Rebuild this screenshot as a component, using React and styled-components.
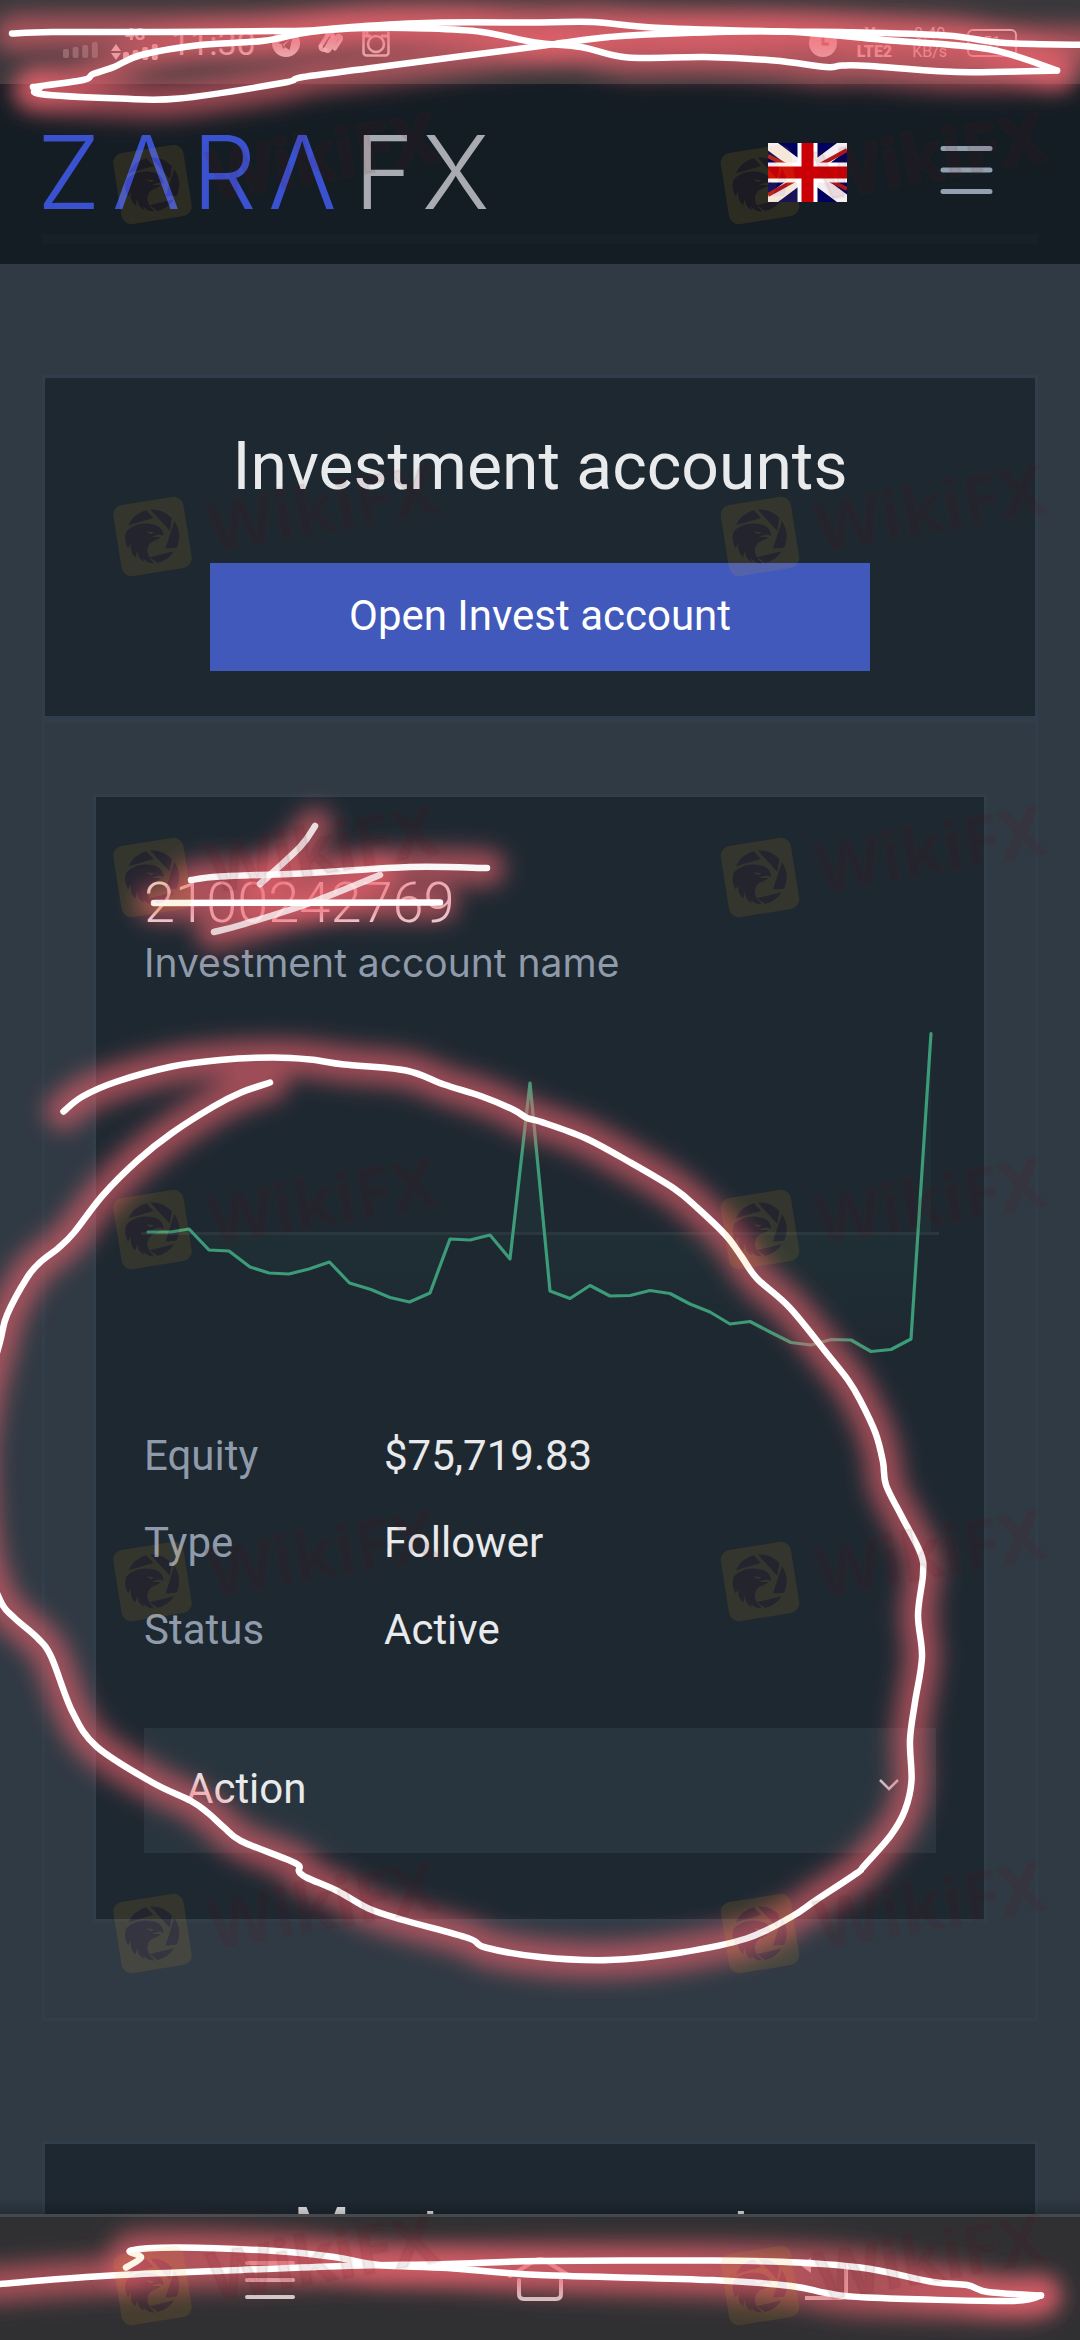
import React from "react";
import styled, { createGlobalStyle } from "styled-components";

const GlobalStyle = createGlobalStyle`
  *, *::before, *::after { box-sizing: border-box; }
  body { margin: 0; background: #303a44; font-family: Roboto, "Open Sans", sans-serif; }
  h1, h2, h3, p, dl, dd { margin: 0; font-weight: 400; }
`;

const Screen = styled.div`
  position: relative;
  display: flex;
  flex-direction: column;
  height: 100vh;
  overflow: hidden;
  background: #303a44;
`;

/* ---------- status bar ---------- */

const StatusBar = styled.div`
  display: flex;
  flex: none;
  align-items: center;
  justify-content: space-between;
  height: 84px;
  padding: 2px 63px 0;
  background: #39383b;
  color: rgba(255, 255, 255, 0.85);
`;

const StatusGroup = styled.div`
  display: flex;
  align-items: center;
  gap: ${(p) => p.$gap}px;
`;

const Clock = styled.span`
  padding-right: 4px;
  font-size: 34px;
  font-weight: 400;
  line-height: 40px;
`;

const Stack = styled.span`
  display: flex;
  flex-direction: column;
  align-items: center;
  font-size: 16px;
  font-weight: ${(p) => (p.$bold ? 900 : 400)};
  line-height: 18px;
`;

const Battery = styled.span`
  display: flex;
  align-items: center;
  justify-content: center;
  width: 50px;
  height: 28px;
  border: 2px solid currentColor;
  border-radius: 6px;
  font-size: 16px;
  line-height: 18px;
`;

/* ---------- site header ---------- */

const SiteHeader = styled.header`
  flex: none;
  padding: 0 42px 20px;
  background: #151d24;
`;

const HeaderRow = styled.div`
  display: flex;
  align-items: center;
  height: 150px;
  padding: 26px 45px 0 0;
`;

const HeaderRule = styled.div`
  height: 10px;
  background: #171f27;
`;

const LogoLink = styled.a`
  display: block;
  margin-right: auto;
  line-height: 0;
`;

const LogoText = styled.text`
  font-family: Inter, Roboto, sans-serif;
  font-size: 102px;
  font-weight: 300;
  fill: ${(p) => p.$fill};
`;

const IconButton = styled.button`
  display: flex;
  padding: 0;
  margin: 0 0 0 ${(p) => p.$before || 0}px;
  border: 0;
  background: none;
  color: ${(p) => p.$color || "inherit"};
`;

/* ---------- page ---------- */

const Main = styled.main`
  display: flex;
  flex: 1;
  flex-direction: column;
  gap: 120px;
  min-height: 0;
  padding: 111px 42px 0;
  overflow: hidden;
`;

const Section = styled.section`
  flex: none;
`;

const SectionHead = styled.div`
  display: flex;
  flex-direction: column;
  align-items: center;
  gap: 57px;
  padding: 50px 0 45px;
  border: 3px solid #303e4b;
  background: #1e2831;
`;

const SectionTitle = styled.h2`
  color: #e9eaec;
  font-size: 66px;
  line-height: 78px;
`;

const PrimaryButton = styled.button`
  width: 66.67%;
  height: 108px;
  padding: 0 0 4px;
  border: 0;
  background: #4059bb;
  color: #fff;
  font: 400 42px/63px Roboto, sans-serif;
`;

const SectionBody = styled.div`
  padding: 72px 48px 96px;
  border: 3px solid #303e4b;
`;

const Card = styled.article`
  padding: 76px 48px 66px;
  border: 3px solid #303e4b;
  background: #1e2831;
`;

const AccountNumber = styled.h3`
  color: #e9eaec;
  font-size: 56px;
  font-weight: 300;
  line-height: 60px;
`;

const AccountName = styled.p`
  color: #8f9bab;
  font-family: Inter, Roboto, sans-serif;
  font-size: 39px;
  line-height: 60px;
`;

const ChartSvg = styled.svg`
  display: block;
  width: 100%;
  margin: 27px 0 44px;
  overflow: visible;
`;

const Details = styled.dl`
  display: grid;
  grid-template-columns: 240px 1fr;
  row-gap: 24px;
  font-size: 42px;
  line-height: 63px;
`;

const Term = styled.dt`
  color: #8f9bab;
`;

const Value = styled.dd`
  color: #e9eaec;
`;

const SelectWrap = styled.label`
  position: relative;
  display: block;
  margin-top: 67px;
`;

const ActionSelect = styled.select`
  display: block;
  width: 100%;
  height: 125px;
  padding: 0 42px 4px;
  border: 0;
  border-radius: 0;
  appearance: none;
  background: #29353e;
  color: #e9eaec;
  font: 400 42px/63px Roboto, sans-serif;
`;

const SelectArrow = styled.svg`
  position: absolute;
  top: 50px;
  right: 36px;
  pointer-events: none;
`;

/* ---------- bottom navigation ---------- */

const NavBar = styled.nav`
  position: relative;
  display: flex;
  flex: none;
  align-items: center;
  justify-content: center;
  gap: 194px;
  height: 126px;
  border-top: 3px solid #43494e;
  background: #303033;
  color: rgba(255, 255, 255, 0.78);

  &::before {
    content: "";
    position: absolute;
    right: 0;
    bottom: 100%;
    left: 0;
    height: 15px;
    margin-bottom: 3px;
    background: linear-gradient(transparent, rgba(0, 0, 0, 0.22));
  }
`;

const Overlay = styled.svg`
  position: absolute;
  inset: 0;
  width: 100%;
  height: 100%;
  pointer-events: none;
`;

const WatermarkText = styled.text`
  font-family: "Noto Sans", sans-serif;
  font-size: 68px;
  font-weight: 700;
`;

/* ---------- drawings ---------- */

const Bars = ({ heights, x = 0 }) =>
  heights.map((h, i) => (
    <rect key={i} x={x + i * 9.6} y={16 - h} width="6" height={h} rx="2" fill="currentColor" />
  ));

function Logo() {
  return (
    <LogoLink href="#home" aria-label="ZARAFX">
      <svg width="447" height="76" viewBox="0 0 447 76" overflow="visible">
        <LogoText $fill="#3a52d0" x="-5 70 150 226" y="75">ZΛRΛ</LogoText>
        <LogoText $fill="#a9abb2" x="312 380" y="75">FX</LogoText>
      </svg>
    </LogoLink>
  );
}

function Flag() {
  return (
    <svg width="79" height="59" viewBox="0 0 79 59">
      <rect width="79" height="59" fill="#00005f" />
      <path d="M0 0 79 59M79 0 0 59" stroke="#f6eff2" strokeWidth="12" />
      <path d="M0 13 22 24M79 46 57 35M79 7 50 23M0 52 29 36" stroke="#b5161c" strokeWidth="4" />
      <path d="M39.5 0V59M0 29.5H79" stroke="#fff" strokeWidth="20" />
      <path d="M39.5 0V59M0 29.5H79" stroke="#cb0007" strokeWidth="12" />
    </svg>
  );
}

const chartPoints =
  "148,1232 171,1232 189,1229 209,1250 229,1251 250,1267 269,1273 289,1274 309,1269 329.5,1262 349.5,1283 371,1289.5 390,1297.5 409.5,1302 430,1293 450,1239 470,1240 490,1235 510,1259 530,1083 550,1291 570,1298.5 590,1285.5 610,1296 630,1295.5 650,1290.5 670,1293.5 690,1304 710,1312 730,1324 750,1321.5 771,1332.5 791,1342.5 811,1345 831,1339.5 851,1340 871,1351.5 891,1349.5 911,1339 931,1033.5";

function EquityChart() {
  return (
    <ChartSvg viewBox="144 1020 792 360" role="img" aria-label="Equity history">
      <defs>
        <linearGradient id="area" x1="0" x2="0" y1="1233" y2="1345" gradientUnits="userSpaceOnUse">
          <stop offset="0" stopColor="#38a07a" stopOpacity="0.06" />
          <stop offset="1" stopColor="#38a07a" stopOpacity="0" />
        </linearGradient>
      </defs>
      <polygon points={`148,1233 ${chartPoints} 931,1233`} fill="url(#area)" />
      <path d="M141 1233.5H939" stroke="#2a373e" strokeWidth="3" />
      <polyline points={chartPoints} fill="none" stroke="#3c9b78" strokeWidth="3.2" strokeLinejoin="round" strokeLinecap="round" />
    </ChartSvg>
  );
}

const smooth = (pts) => {
  let d = `M${pts[0][0]} ${pts[0][1]}`;
  for (let i = 0; i < pts.length - 1; i += 1) {
    const a = pts[i - 1] || pts[i];
    const b = pts[i];
    const c = pts[i + 1];
    const e = pts[i + 2] || c;
    const c1 = [b[0] + (c[0] - a[0]) / 6, b[1] + (c[1] - a[1]) / 6];
    const c2 = [c[0] - (e[0] - b[0]) / 6, c[1] - (e[1] - b[1]) / 6];
    d += `C${c1.join(" ")} ${c2.join(" ")} ${c[0]} ${c[1]}`;
  }
  return d;
};

const scribbles = [
  { pts: [[12, 33.5], [52, 32], [165, 32], [275, 31], [310, 30.5], [365, 26], [441, 22.5], [540, 22.5], [592, 22], [661, 28], [781, 31.5], [840, 32], [946, 35.5], [1005, 43], [1090, 45]] },
  { pts: [[33, 87], [83, 80], [93, 74], [114, 67], [141, 55], [200, 45], [262, 41], [310, 32], [365, 28], [427, 28.5], [482, 32], [535, 42.5], [581, 47], [628, 57.5], [705, 57], [774, 60.5], [826, 67], [842, 65.5], [870, 66], [957, 72], [1057, 70.5]] },
  { pts: [[1057, 70.5], [988, 49], [884, 40], [781, 31.5], [660, 34], [609, 37], [561, 43], [540, 46], [379, 67], [303, 77], [282, 83], [179, 98.5], [120, 98.5], [40, 94], [40, 88]] },
  { pts: [[315, 826], [300, 847], [260, 884]], opacity: 0.82 },
  { pts: [[191, 880], [220, 876.5], [310, 873], [410, 867], [487, 868]], opacity: 0.95 },
  { pts: [[380, 875], [310, 903], [241, 925], [214, 932]], opacity: 0.75 },
  { pts: [[154, 903], [440, 902.5]] },
  { pts: [[63.5, 1111.5], [82.5, 1096.5], [117, 1081.5], [172, 1066.5], [220, 1060], [272, 1057.5], [310, 1059.5], [344, 1064.5], [406, 1070.5], [444, 1084.5], [482, 1096.5], [513, 1109.5], [527, 1118], [540, 1121.5], [585, 1138], [629.5, 1162], [674, 1188.5], [698, 1208.5], [726, 1235.5], [741.5, 1256.5], [757, 1278.5], [790, 1308], [829, 1356], [848, 1380], [860, 1400], [875.5, 1433], [883, 1462], [886, 1485], [901.5, 1516], [920.5, 1553], [923, 1574], [918, 1615], [922, 1657], [915, 1702], [910, 1740], [911.5, 1781], [905, 1810], [891, 1835], [864, 1866], [857, 1873], [815.5, 1900.5], [791, 1917], [746.5, 1938.5], [678, 1953], [609, 1960], [540, 1957], [485.5, 1947.5], [468, 1938], [403, 1920], [368.5, 1908.5], [337.5, 1891], [306.5, 1877.5], [299, 1871.5], [299, 1865.5], [286, 1859], [241, 1841], [224, 1827.5], [208, 1813], [191, 1801], [151.5, 1782], [96.5, 1746.5], [72, 1711], [51.5, 1657.5], [38, 1638.5], [14, 1617.5], [0, 1600], [-16, 1550], [-22, 1460], [-14, 1395], [0, 1342], [7, 1315], [27.5, 1277], [41, 1261.5], [58.5, 1248], [74, 1232.5], [103, 1195], [138, 1160], [172, 1133], [213.5, 1106.5], [241, 1092.5], [270, 1082.5]] },
  { pts: [[-10, 2285], [0, 2284], [103, 2276], [241, 2270], [344, 2266], [448, 2264], [540, 2261], [712, 2260.5], [798, 2262.5], [867, 2268.5], [933, 2282], [967, 2285], [988, 2292], [1041, 2295.5]] },
  { pts: [[1041, 2295.5], [1008, 2301], [867, 2297.5], [826, 2293], [791, 2286], [712, 2280], [540, 2275], [448, 2268], [379, 2265], [334, 2257], [275.5, 2251], [179, 2247.5], [131, 2250.5], [141, 2257.5], [126, 2267.5]] },
].map((s) => ({ d: smooth(s.pts), opacity: s.opacity || 1 }));

const EagleShape = (props) => (
  <g {...props}>
    <path d="M-22-15A27 27 0 0 1-2-27L4-18-22-15Z" />
    <path d="M1-27A27 27 0 0 1 22-15L18-3 2-27Z" />
    <path d="M24-12A27 27 0 0 1 22 15L11 14 24-12Z" />
    <path d="M19 18A27 27 0 0 1 1 27L-6 20 19 18Z" />
    <path
      fillRule="evenodd"
      d="M-25-9C-19-14-8-16 2-12C8-10 12-5 11 1L7-1L-1 0C2 1 5 1 8 2C3 5-2 4-5 8C-9 13-8 20-2 27C-8 26-12 23-13 18L-12 24C-16 21-18 17-17 11L-20 18C-24 13-24 8-22 3L-26 8C-28 2-28-4-25-9ZM-5-6L2-4C0-2-3-2-5-6Z"
    />
  </g>
);

const marks = [0, 1, 2, 3, 4, 5, 6].flatMap((r) =>
  [152.5, 760].map((x) => [x, 184.5 + r * 352 - (r > 1 ? 11 : 0)])
);

function Annotations() {
  return (
    <Overlay viewBox="0 0 1080 2340" preserveAspectRatio="none" aria-hidden="true">
      <defs>
        <filter id="glow" filterUnits="userSpaceOnUse" x="-80" y="-60" width="1240" height="2460">
          <feGaussianBlur stdDeviation="11" />
        </filter>
        <mask id="eagle" maskUnits="userSpaceOnUse" x="-40" y="-40" width="80" height="80">
          <rect x="-40" y="-40" width="80" height="80" fill="#fff" />
          <EagleShape fill="#000" />
        </mask>
      </defs>
      <g fill="none" strokeLinecap="round" strokeLinejoin="round">
        {scribbles.map((s) => (
          <path key={s.d} d={s.d} stroke="#f4666f" strokeWidth="36" strokeOpacity={0.6} filter="url(#glow)" />
        ))}
        {scribbles.map((s) => (
          <path key={s.d} d={s.d} stroke="#fff" strokeWidth="6.5" strokeOpacity={s.opacity} />
        ))}
      </g>
      {marks.map(([x, y]) => (
        <g key={`${x}-${y}`}>
          <g transform={`translate(${x} ${y}) rotate(-9)`}>
            <rect x="-35.5" y="-36" width="71" height="72" rx="10" fill="#f1aa1d" fillOpacity="0.11" mask="url(#eagle)" />
            <EagleShape fill="#6e0218" fillOpacity="0.085" />
          </g>
          <g transform={`translate(${x + 71} ${y + 14}) rotate(-10)`}>
            <WatermarkText x="-11" y="0" fill="#6e0218" fillOpacity="0.085" stroke="#6e3018" strokeOpacity="0.06" strokeWidth="3" strokeLinejoin="round">
              WikiFX
            </WatermarkText>
          </g>
        </g>
      ))}
    </Overlay>
  );
}

export default function App() {
  return (
    <Screen>
      <GlobalStyle />
      <StatusBar>
        <StatusGroup $gap={12}>
          <svg width="36" height="30" viewBox="0 -14 36 30" opacity="0.3"><Bars heights={[9, 11, 13, 16]} /></svg>
          <Stack $bold>
            <span>4G</span>
            <svg width="48" height="17" viewBox="0 0 48 17">
              <path d="M0 7 5 0 10 7ZM0 9H10L5 16Z" fill="currentColor" />
              <Bars x={12} heights={[8, 10, 13, 16]} />
            </svg>
          </Stack>
          <Clock>11:30</Clock>
          <StatusGroup $gap={17}>
            <svg width="28" height="28" viewBox="0 0 28 28">
              <path fillRule="evenodd" fill="currentColor" d="M14 0a14 14 0 1 0 0 28a14 14 0 0 0 0-28ZM21 7 17.5 21 13 18 11 20 10 15.5 6 14ZM18 10 11 15.5 12 18.5 12.5 16Z" />
            </svg>
            <svg width="28" height="28" viewBox="0 0 30 28" fill="none" stroke="currentColor" strokeWidth="4.5" strokeLinecap="round" strokeLinejoin="round">
              <path d="M4 17 11 6M9 21 17 7M9 21C11 24 13 22 14 20L21 8C23 5 27 7 25 11L19 20" />
              <path d="M4 17C3 20 6 22 9 21M11 6C13 3 17 4 17 7" />
            </svg>
            <svg width="28" height="28" viewBox="0 0 28 28" fill="none" stroke="currentColor" strokeWidth="2.5">
              <rect x="1.5" y="1.5" width="25" height="25" rx="3" />
              <circle cx="14" cy="15" r="8" />
              <path d="M2 7H9M19 7H26M5 2V6" strokeWidth="3" />
            </svg>
          </StatusGroup>
        </StatusGroup>
        <StatusGroup $gap={20}>
          <svg width="28" height="28" viewBox="0 0 28 28">
            <circle cx="14" cy="14" r="14" fill="currentColor" />
            <path d="M14 6V15H20" fill="none" stroke="#a85a63" strokeWidth="3" />
          </svg>
          <Stack $bold><span>Vo</span><span>LTE2</span></Stack>
          <Stack><span>0.40</span><span>KB/s</span></Stack>
          <Battery>51</Battery>
        </StatusGroup>
      </StatusBar>

      <SiteHeader>
        <HeaderRow>
          <Logo />
          <IconButton type="button" aria-label="Language: English"><Flag /></IconButton>
          <IconButton type="button" aria-label="Menu" $before={93} $color="#93a0af">
            <svg width="53" height="59" viewBox="0 0 53 59" stroke="currentColor" strokeWidth="5" strokeLinecap="round">
              <path d="M3 5.500H50M3 27H50M3 48.500H50" />
            </svg>
          </IconButton>
        </HeaderRow>
        <HeaderRule />
      </SiteHeader>

      <Main>
        <Section>
          <SectionHead>
            <SectionTitle>Investment accounts</SectionTitle>
            <PrimaryButton type="button">Open Invest account</PrimaryButton>
          </SectionHead>
          <SectionBody>
            <Card>
              <AccountNumber>2100242769</AccountNumber>
              <AccountName>Investment account name</AccountName>
              <EquityChart />
              <Details>
                <Term>Equity</Term>
                <Value>$75,719.83</Value>
                <Term>Type</Term>
                <Value>Follower</Value>
                <Term>Status</Term>
                <Value>Active</Value>
              </Details>
              <SelectWrap>
                <ActionSelect aria-label="Action" defaultValue="action">
                  <option value="action">Action</option>
                </ActionSelect>
                <SelectArrow width="22" height="14" viewBox="0 0 22 14" fill="none" stroke="#c9c3c9" strokeWidth="2.500">
                  <path d="M2 2 11 11 20 2" />
                </SelectArrow>
              </SelectWrap>
            </Card>
          </SectionBody>
        </Section>
        <Section>
          <SectionHead>
            <SectionTitle>Master accounts</SectionTitle>
          </SectionHead>
        </Section>
      </Main>

      <NavBar aria-label="System">
        <IconButton type="button" aria-label="Recent apps">
          <svg width="76" height="44" viewBox="-13 -3 76 44" stroke="currentColor" strokeWidth="4" strokeLinecap="round">
            <path d="M2 3H48M2 20H48M2 37H48" />
          </svg>
        </IconButton>
        <IconButton type="button" aria-label="Home">
          <svg width="76" height="44" viewBox="-6 0 76 44" fill="none" stroke="currentColor" strokeWidth="4" strokeLinecap="round" strokeLinejoin="round">
            <path d="M2 19 28 3Q32 1 36 3L62 19M11 23V37Q11 42 16 42H48Q53 42 53 37V23" />
          </svg>
        </IconButton>
        <IconButton type="button" aria-label="Back">
          <svg width="76" height="44" viewBox="-27 0 76 44" fill="none" stroke="currentColor" strokeWidth="4">
            <path d="M4 8H42Q47 8 47 13V36Q47 41 42 41H6" />
            <path d="M12 1V16L1 8Z" fill="currentColor" stroke="none" />
          </svg>
        </IconButton>
      </NavBar>
      <Annotations />
    </Screen>
  );
}
